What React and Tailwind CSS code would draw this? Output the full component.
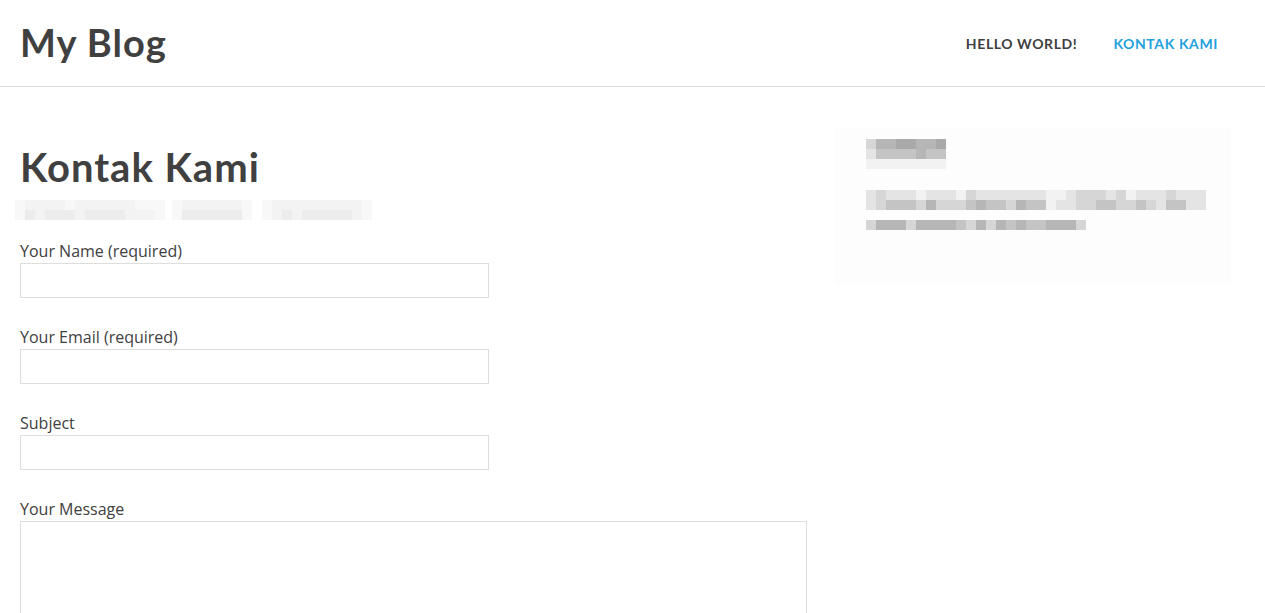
import React from 'react';

const heading = { fontFamily: 'Lato, "Open Sans", sans-serif' };

// pixelated (blurred) placeholder rows from the reference
const Mosaic = ({ rows }) => (
  <div className="flex flex-col">
    {rows.map((row, i) => (
      <div key={i} className="flex">
        {row.map((c, j) => (
          <div key={j} className={`h-[10px] ${c}`} />
        ))}
      </div>
    ))}
  </div>
);

const L = 'w-[10px] bg-[#ececec]';
const M = 'w-[10px] bg-[#f3f3f3]';
const N = 'w-[10px] bg-[#f8f8f8]';
const W = 'w-[10px] bg-white';
const G = 'w-[7px] bg-white';

const subtitleRows = [
  [N, M, M, M, M, N, M, M, M, M, M, M, N, N, N, G, N, M, M, M, M, M, M, N, W, N, M, M, M, M, M, M, M, M, M, N],
  [N, L, M, L, L, L, M, L, L, L, L, M, M, M, N, G, N, L, L, L, L, L, L, N, W, N, M, L, M, L, L, L, L, L, M, N],
];

const D1 = 'w-[10px] bg-[#a9a9aa]';
const D2 = 'w-[10px] bg-[#b6b6b7]';
const D3 = 'w-[10px] bg-[#c4c4c5]';
const D4 = 'w-[10px] bg-[#d6d6d6]';
const D5 = 'w-[10px] bg-[#e4e4e5]';
const D6 = 'w-[10px] bg-[#f2f2f2]';

const titleRows = [
  [D4, D2, D2, D1, D1, D2, D2, D1],
  [D5, D3, D3, D3, D3, D2, D3, D3],
  [D6, D6, D6, D6, D6, D6, D6, D6],
];

const textRows = [
  [D5, D4, D5, D5, D5, D6, D5, D5, D5, D6, D4, D5, D5, D5, D5, D5, D5, D5, D6, D6, D5, D4, D4, D4, D5, D4, D6, D5, D5, D5, D4, D5, D5, D5],
  [D5, D4, D3, D3, D3, D4, D2, D4, D4, D4, D3, D2, D3, D3, D4, D2, D3, D3, D6, D5, D5, D4, D4, D3, D3, D4, D4, D3, D4, D5, D3, D3, D5, D5],
];

const textRows2 = [
  [D4, D2, D2, D2, D4, D2, D2, D2, D2, D3, D4, D2, D4, D2, D3, D2, D3, D3, D2, D2, D2, D4],
];

const Field = ({ label, tall }) => (
  <div className="flex flex-col">
    <label className="text-[16px] leading-[22px] text-[#404040]">{label}</label>
    {tall ? (
      <textarea className="mt-[1px] w-[787px] h-[200px] border border-[#dddddd] bg-white resize-none outline-none" />
    ) : (
      <input className="mt-[1px] w-[469px] h-[35px] border border-[#dddddd] bg-white outline-none" />
    )}
  </div>
);

export default function App() {
  return (
    <div className="min-h-screen bg-white text-[#404040]" style={{ fontFamily: '"Open Sans", "Noto Sans", sans-serif' }}>
      <header className="h-[87px] border-b border-[#dddddd] flex items-center justify-between pl-[20px] pr-[47px]">
        <div className="text-[38px] font-bold leading-none pb-[3px] tracking-[1px] text-[#404040]" style={heading}>
          My Blog
        </div>
        <nav className="flex gap-[36px] text-[14px] font-bold uppercase tracking-[0.6px]" style={heading}>
          <a className="text-[#404040]">Hello World!</a>
          <a className="text-[#1fa1dc]">Kontak Kami</a>
        </nav>
      </header>

      <div className="flex pl-[20px] pr-[33px] gap-[28px]">
        <main className="w-[787px] pt-[58px]">
          <h1 className="text-[40px] font-bold leading-[44px] tracking-[1px] text-[#404040]" style={heading}>
            Kontak Kami
          </h1>
          <div className="mt-[11px] -ml-[5px]">
            <Mosaic rows={subtitleRows} />
          </div>
          <div className="mt-[20px] flex flex-col gap-[28px]">
            <Field label="Your Name (required)" />
            <Field label="Your Email (required)" />
            <Field label="Subject" />
            <Field label="Your Message" tall />
          </div>
        </main>

        <aside className="mt-[41px] w-[396px] h-[157px] bg-[#fdfdfd] pl-[31px] pt-[11px]">
          <Mosaic rows={titleRows} />
          <div className="mt-[21px]">
            <Mosaic rows={textRows} />
          </div>
          <div className="mt-[10px]">
            <Mosaic rows={textRows2} />
          </div>
        </aside>
      </div>
    </div>
  );
}
